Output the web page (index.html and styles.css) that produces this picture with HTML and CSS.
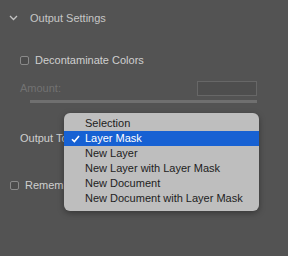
FILE: index.html
```html
<!DOCTYPE html>
<html>
<head>
<meta charset="utf-8">
<link rel="stylesheet" href="styles.css">
</head>
<body>
<div class="panel">
  <div class="header">
    <svg class="chev" width="9" height="6" viewBox="0 0 9 6"><path d="M1 1 L4.5 4.5 L8 1" fill="none" stroke="#c4c4c4" stroke-width="1.3"/></svg>
    <span class="title">Output Settings</span>
  </div>
  <div class="check-row indent">
    <span class="box"></span>
    <span class="label">Decontaminate Colors</span>
  </div>
  <div class="amount-row">
    <span class="dim">Amount:</span>
    <span class="field"></span>
  </div>
  <div class="slider"></div>
  <div class="output-row">
    <span class="label">Output To:</span>
  </div>
  <div class="check-row remember">
    <span class="box"></span>
    <span class="label">Remember Settings</span>
  </div>
</div>
<div class="menu">
  <div class="item">Selection</div>
  <div class="item selected"><svg class="check" width="9" height="8" viewBox="0 0 9 8"><path d="M1 4.2 L3.4 6.6 L8 1" fill="none" stroke="#ffffff" stroke-width="1.6"/></svg>Layer Mask</div>
  <div class="item">New Layer</div>
  <div class="item">New Layer with Layer Mask</div>
  <div class="item">New Document</div>
  <div class="item">New Document with Layer Mask</div>
</div>
</body>
</html>
```
FILE: styles.css
```css
html, body {
  margin: 0;
  padding: 0;
  background: #535353;
  width: 288px;
  height: 256px;
  overflow: hidden;
  font-family: "Liberation Sans", Arial, sans-serif;
  font-size: 11px;
  color: #cfcfcf;
}
.panel {
  display: flex;
  flex-direction: column;
  padding-top: 8px;
}
.header {
  display: flex;
  align-items: center;
  height: 20px;
  padding-left: 9px;
  gap: 12px;
}
.title {
  color: #c6c6c6;
}
.check-row {
  display: flex;
  align-items: center;
  height: 16px;
  gap: 6px;
}
.indent {
  margin-top: 24px;
  padding-left: 20px;
}
.box {
  width: 7px;
  height: 7px;
  border: 1px solid #8a8a8a;
  border-radius: 2px;
  background: #4c4c4c;
}
.amount-row {
  display: flex;
  align-items: center;
  justify-content: space-between;
  height: 16px;
  margin-top: 12px;
  padding-left: 20px;
  width: 237px;
}
.dim {
  color: #727272;
}
.field {
  width: 58px;
  height: 13px;
  border: 1px solid #676767;
  background: #4e4e4e;
}
.slider {
  margin-top: 4px;
  margin-left: 30px;
  width: 227px;
  height: 3px;
  background: #6f6f6f;
}
.output-row {
  display: flex;
  align-items: center;
  height: 16px;
  margin-top: 27px;
  padding-left: 20px;
}
.remember {
  margin-top: 31px;
  padding-left: 10px;
}
.menu {
  position: absolute;
  left: 64px;
  top: 113px;
  width: 195px;
  padding: 3px 0 5px;
  background: #bebebe;
  border-radius: 6px;
  box-shadow: 0 2px 6px rgba(0,0,0,0.35);
  color: #1d1d1d;
}
.item {
  position: relative;
  height: 15px;
  line-height: 15px;
  padding-left: 21px;
}
.selected {
  background: #1761d3;
  color: #ffffff;
}
.check {
  position: absolute;
  left: 7px;
  top: 4px;
}
```
